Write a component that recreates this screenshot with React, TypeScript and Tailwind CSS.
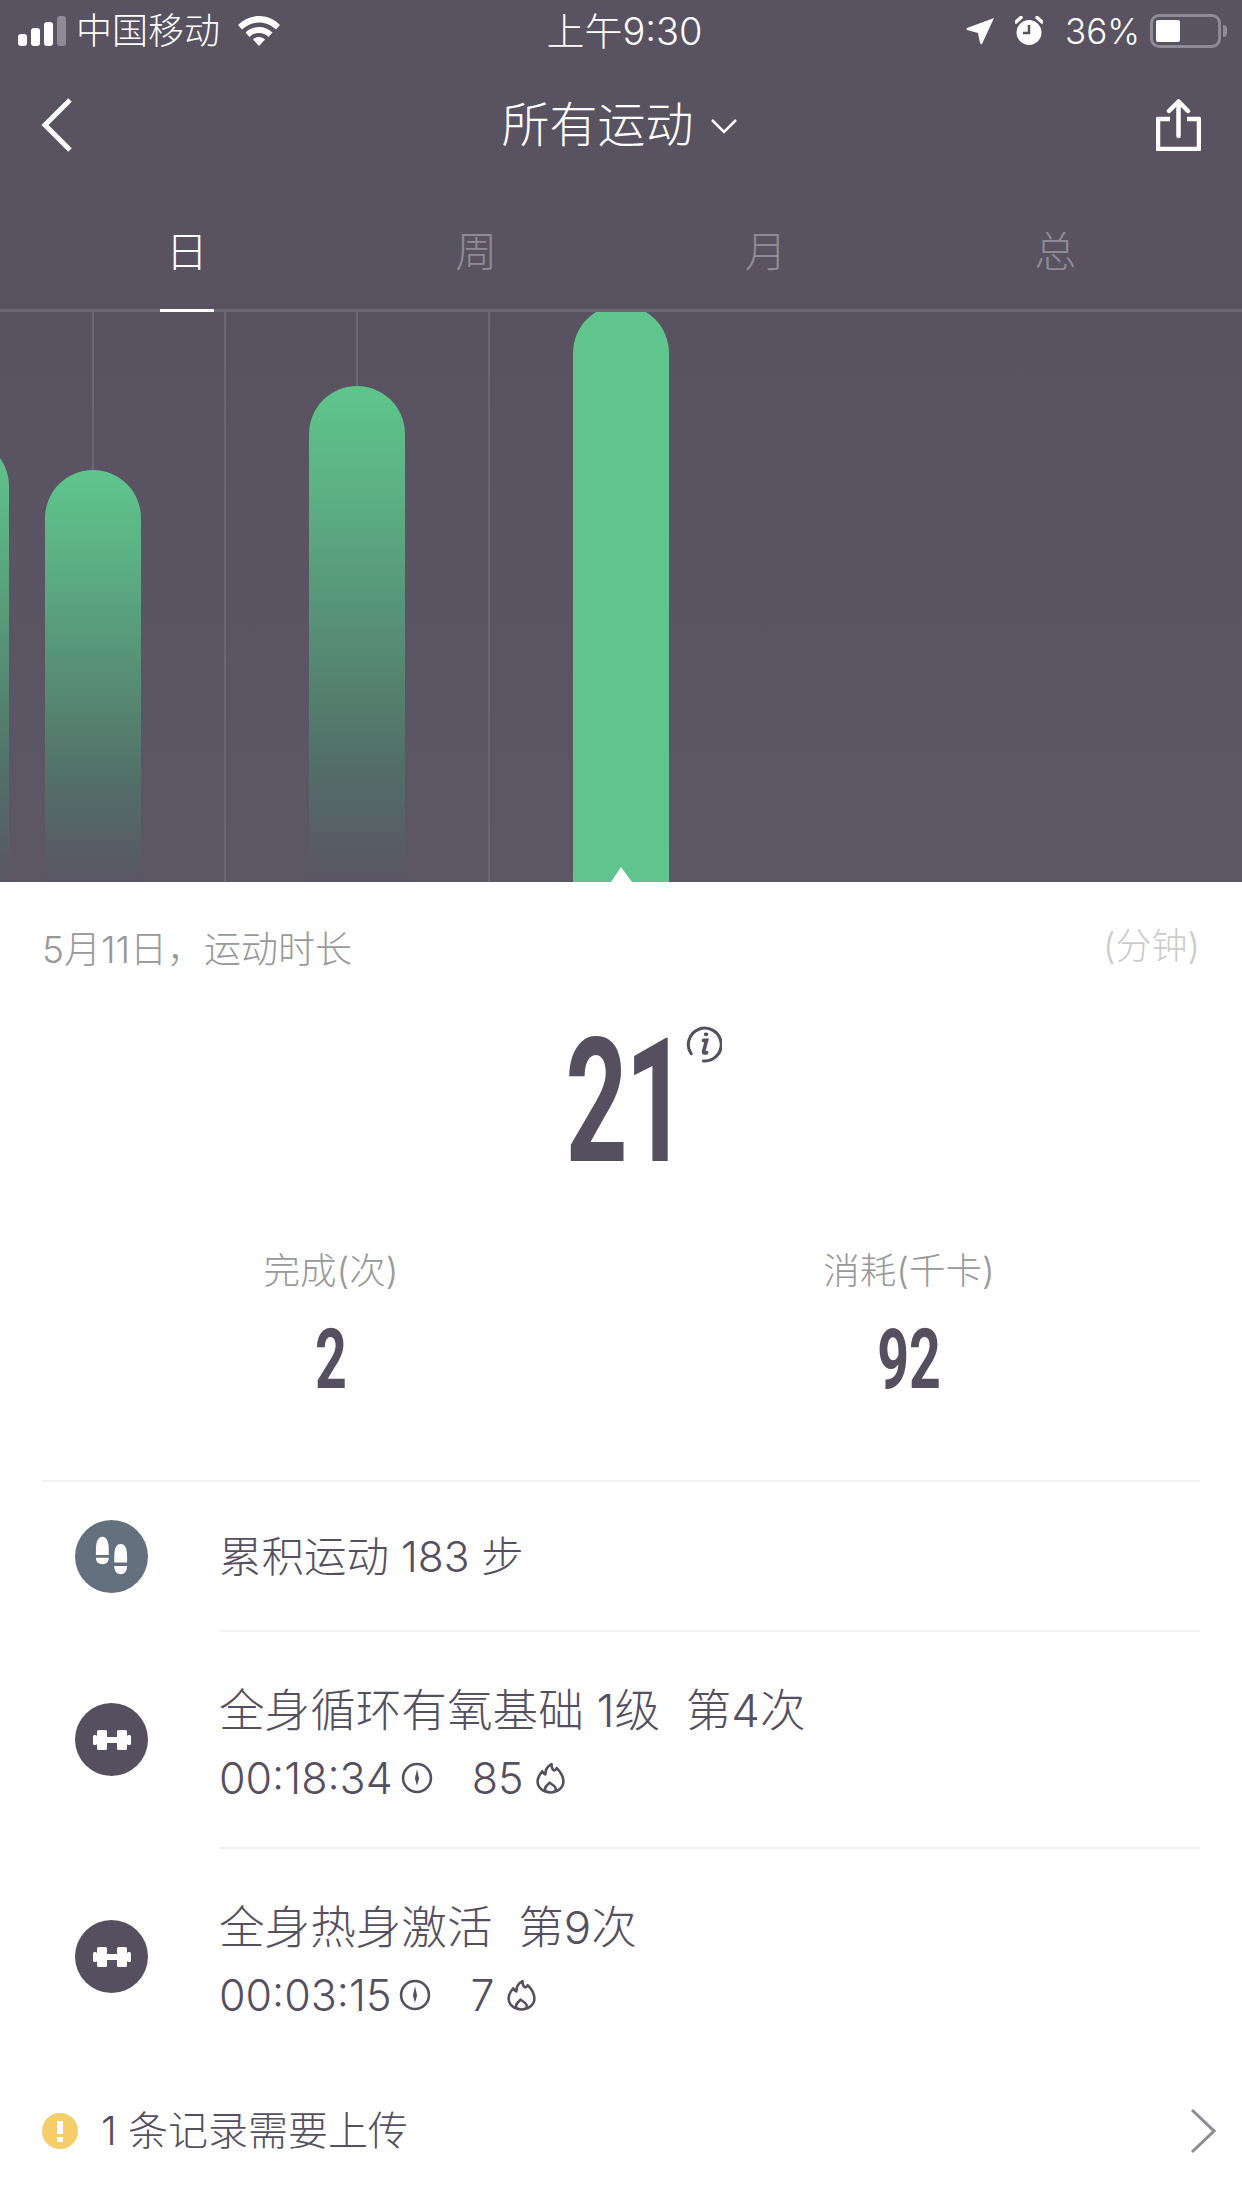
const DARK = "#564f5f";

function Signal() {
  return (
    <div className="flex items-end gap-1 h-[29px]">
      <span className="w-[9px] h-[12px] rounded-[3px] bg-white" />
      <span className="w-[9px] h-[18px] rounded-[3px] bg-white" />
      <span className="w-[9px] h-[24px] rounded-[3px] bg-white" />
      <span className="w-[9px] h-[30px] rounded-[3px] bg-[#8f8b96]" />
    </div>
  );
}

function Wifi() {
  return (
    <svg width="42" height="30" viewBox="0 0 42 30" fill="white">
      <path d="M21 0C13 0 6 3 0 9l4 4.500C9 9 15 6.500 21 6.500S33 9 38 13.500L42 9C36 3 29 0 21 0z" />
      <path d="M21 11c-5 0-10 2-13.500 5.500l4 4.500c2.500-2.500 6-4 9.500-4s7 1.500 9.500 4l4-4.500C31 13 26 11 21 11z" />
      <path d="M21 21c-2.500 0-4.500 1-6 2.500L21 30l6-6.500C25.500 22 23.500 21 21 21z" />
    </svg>
  );
}

function Location() {
  return (
    <svg width="28" height="28" viewBox="0 0 28 28" fill="white">
      <path d="M28 1 L16 27 Q15 28 14 26 L12 16 L1 13 Q0 12 1 11 Z" />
    </svg>
  );
}

function Alarm() {
  return (
    <svg width="28" height="30" viewBox="0 0 28 30">
      <circle cx="14" cy="16.500" r="12.500" fill="white" />
      <path d="M1 6 L6 1.500 M27 6 L22 1.500" stroke="white" strokeWidth="3.500" strokeLinecap="round" />
      <path d="M14 9 V17 H8" stroke="#585261" strokeWidth="2.500" fill="none" />
    </svg>
  );
}

function Battery() {
  return (
    <div className="flex items-center gap-[2px]">
      <div className="w-[71px] h-[34px] rounded-[9px] border-[3px] border-[#8f8b96] p-[3px]">
        <div className="w-[24px] h-full rounded-[2px] bg-white" />
      </div>
      <div className="w-[4px] h-[12px] rounded-r-full bg-[#8f8b96]" />
    </div>
  );
}

function Back() {
  return (
    <svg width="32" height="54" viewBox="0 0 32 54" fill="none" stroke="white" strokeWidth="5">
      <path d="M29 2 L4 27 L29 52" />
    </svg>
  );
}

function Caret() {
  return (
    <svg width="28" height="16" viewBox="0 0 28 16" fill="none" stroke="white" strokeWidth="2.500">
      <path d="M2 2 L14 14 L26 2" />
    </svg>
  );
}

function Share() {
  return (
    <svg width="45" height="52" viewBox="0 0 45 52" fill="none" stroke="white" strokeWidth="4.500">
      <path d="M14 20 H2 V50 H43 V20 H31" strokeLinejoin="round" />
      <path d="M22.500 37 V3" strokeLinecap="round" />
      <path d="M13 12 L22.500 2.500 L32 12" strokeLinecap="round" strokeLinejoin="round" />
    </svg>
  );
}

// chart y is page y - 312
function Chart() {
  return (
    <svg width="1242" height="570" viewBox="0 0 1242 570" className="block">
      <defs>
        <linearGradient id="bg" x1="0" y1="0" x2="0" y2="1">
          <stop offset="0" stopColor="#5fc58c" />
          <stop offset="0.2" stopColor="#5cb285" />
          <stop offset="0.75" stopColor="#527068" />
          <stop offset="1" stopColor="#5a5565" />
        </linearGradient>
      </defs>
      <path d="M93 0 V158 M225 0 V570 M357 0 V74 M489 0 V570" stroke="#6b6675" strokeWidth="2" />
      <path d="M-87 570 V174 a48 48 0 0 1 96 0 V570 Z" fill="url(#bg)" />
      <path d="M45 570 V206 a48 48 0 0 1 96 0 V570 Z" fill="url(#bg)" />
      <path d="M309 570 V122 a48 48 0 0 1 96 0 V570 Z" fill="url(#bg)" />
      <path d="M573 570 V41 a48 48 0 0 1 96 0 V570 Z" fill="#5fc58c" />
      <path d="M611 570 L621 555 L632 570 Z" fill="white" />
    </svg>
  );
}

function Dumbbell() {
  return (
    <svg width="38" height="22" viewBox="0 0 38 22" fill="white">
      <rect x="0" y="6" width="4" height="10" rx="1.500" />
      <rect x="4" y="1" width="10" height="20" rx="1.500" />
      <rect x="14" y="8" width="10" height="6" />
      <rect x="24" y="1" width="10" height="20" rx="1.500" />
      <rect x="34" y="6" width="4" height="10" rx="1.500" />
    </svg>
  );
}

function Steps() {
  return (
    <svg width="33" height="40" viewBox="0 0 36 42" fill="white">
      <path d="M1 14 C1 4 4 0 8 0 C12 0 15 4 15 14 V20 H1 Z" />
      <path d="M1 23 H15 C15 28 12 30 8 30 C4 30 1 28 1 23 Z" />
      <path d="M21 22 C21 11 24 8 28 8 C32 8 35 11 35 22 V28 H21 Z" />
      <path d="M21 32 H35 C35 38 32 41 28 41 C24 41 21 38 21 32 Z" />
    </svg>
  );
}

function IconCircle({ color, children }: { color: string; children: React.ReactNode }) {
  return (
    <div
      className="w-[73px] h-[73px] rounded-full flex items-center justify-center shrink-0"
      style={{ backgroundColor: color }}
    >
      {children}
    </div>
  );
}

function Clock() {
  return (
    <svg width="32" height="32" viewBox="0 0 31 31" fill="none" stroke={DARK} strokeWidth="2.500" className="ml-[8px]">
      <circle cx="15.500" cy="15.500" r="13.500" />
      <path d="M15.500 7 L17.500 16 L15.500 23 L13.500 16 Z" fill={DARK} stroke="none" />
    </svg>
  );
}

function Flame() {
  return (
    <svg width="29" height="32" viewBox="0 0 28 31" fill="none" stroke={DARK} strokeWidth="2.500" strokeLinejoin="round" strokeLinecap="round" className="ml-[12px]">
      <path d="M15 2 C15 8 18 10 20 6 C24 10 26.500 14 26.500 19 C26.500 25 21 29.500 14 29.500 C7 29.500 1.500 25 1.500 19 C1.500 15 3.500 12 6 9 C7 11 8 12 9 12 C9 8 11 4 15 2 Z" />
      <path d="M9 27 C7.500 24 11 23 13 20 C16 22 20 24 19 27" />
    </svg>
  );
}

function Workout({ title, time, kcal }: { title: string; time: string; kcal: string }) {
  return (
    <div className="flex items-center h-[215px]">
      <div className="ml-[75px] mr-[71px]">
        <IconCircle color={DARK}><Dumbbell /></IconCircle>
      </div>
      <div className="mt-[4px]">
        <div className="text-[45.6px] leading-[62px] whitespace-pre">{title}</div>
        <div className="flex items-center text-[43px] leading-[52px] mt-[10px]">
          <span>{time}</span>
          <Clock />
          <span className="ml-[39px]">{kcal}</span>
          <Flame />
        </div>
      </div>
    </div>
  );
}

export default function App() {
  return (
    <div className="w-[1242px] h-[2208px] bg-white overflow-hidden font-light font-['Inter','Noto_Sans_CJK_SC',sans-serif] text-[#564f5f]">
      <div className="h-[312px] bg-[#585261] text-white">
        <div className="h-[60px] grid grid-cols-3 items-center pl-[18px] pr-[15px] pt-[2px]">
          <div className="flex items-center">
            <Signal />
            <span className="ml-[10px] text-[36px]">中国移动</span>
            <span className="ml-[18px]"><Wifi /></span>
          </div>
          <div className="text-center text-[38px] pl-[4px]">上午9:30</div>
          <div className="flex items-center justify-end">
            <Location />
            <span className="ml-[21px]"><Alarm /></span>
            <span className="ml-[22px] text-[35px]">36%</span>
            <span className="ml-[10px]"><Battery /></span>
          </div>
        </div>
        <div className="h-[130px] flex items-center justify-between pl-[41px] pr-[41px]">
          <Back />
          <div className="flex items-center text-[48px] ml-[10px]">
            所有运动
            <span className="ml-[16px] mt-[2px]"><Caret /></span>
          </div>
          <Share />
        </div>
        <div className="h-[122px] border-b-[3px] border-[#6b6675] grid grid-cols-4 px-[42px] pt-[4px]">
          {["日", "周", "月", "总"].map((t, i) => (
            <div key={t} className="relative flex items-center justify-center">
              <span className={i === 0 ? "text-[42px] text-white" : "text-[42px] text-[#8f8b96]"}>{t}</span>
              {i === 0 && <span className="absolute left-[118px] -bottom-[3px] w-[54px] h-[3px] bg-white" />}
            </div>
          ))}
        </div>
      </div>

      <div className="h-[570px] bg-gradient-to-b from-[#585261] to-[#5c5665]">
        <Chart />
      </div>

      <div className="relative px-[42px] pt-[44px]">
        <div className="flex justify-between items-start">
          <span className="text-[37px] leading-[48px] text-[#999999]">5月11日，运动时长</span>
          <span className="text-[36px] leading-[40px] text-[#cccccc]">(分钟)</span>
        </div>

        <div className="relative h-[180px] mt-[42px] flex justify-center">
          <span className="block w-[100px] text-center font-['Roboto'] font-bold text-[172px] leading-[172px] tracking-[-4px] scale-x-[0.63] -ml-[48px]">
            21
          </span>
          <svg width="37" height="37" viewBox="0 0 36 36" fill="none" className="absolute left-[643px] top-[10px]">
            <path d="M6 27 A16 16 0 1 1 18 34" stroke={DARK} strokeWidth="3" strokeLinecap="round" />
            <path d="M20 8 h1 M18 14 h3 l-3 11 q0 2 3 1" stroke={DARK} strokeWidth="3.500" strokeLinecap="round" />
          </svg>
        </div>

        <div className="grid grid-cols-2 mt-[51px] h-[146px] text-center">
          <div className="w-[578px]">
            <div className="text-[36.500px] leading-[48px] text-[#999999]">完成(次)</div>
            <div className="font-['Roboto'] font-bold text-[84px] leading-[90px] mt-[20px] scale-x-[0.66] text-center">2</div>
          </div>
          <div className="-ml-[1px] w-[578px]">
            <div className="text-[36.500px] leading-[48px] text-[#999999]">消耗(千卡)</div>
            <div className="font-['Roboto'] font-bold text-[84px] leading-[90px] mt-[20px] scale-x-[0.66] text-center">92</div>
          </div>
        </div>
      </div>

      <div className="mt-[87px] mx-[42px] border-t-2 border-[#f2f2f2]" />

      <div className="flex items-center h-[148px]">
        <div className="ml-[75px] mr-[71px]">
          <IconCircle color="#65707e"><Steps /></IconCircle>
        </div>
        <span className="text-[42.500px] mt-[2px]">累积运动 183 步</span>
      </div>
      <div className="ml-[220px] mr-[42px] border-t-2 border-[#f2f2f2]" />
      <Workout title="全身循环有氧基础 1级  第4次" time="00:18:34" kcal="85" />
      <div className="ml-[220px] mr-[42px] border-t-2 border-[#f2f2f2]" />
      <Workout title="全身热身激活  第9次" time="00:03:15" kcal="7" />

      <div className="flex items-center mt-[37px] pl-[42px] pr-[26px]">
        <svg width="36" height="36" viewBox="0 0 36 36">
          <circle cx="18" cy="18" r="18" fill="#f6cd6b" />
          <rect x="15" y="8" width="6" height="13" fill="white" />
          <rect x="15" y="24" width="6" height="5" fill="white" />
        </svg>
        <span className="ml-[23px] text-[40px]">1 条记录需要上传</span>
        <svg width="26" height="46" viewBox="0 0 26 46" fill="none" stroke="#8f8b96" strokeWidth="3" className="ml-auto">
          <path d="M2 2 L24 23 L2 44" />
        </svg>
      </div>
    </div>
  );
}
